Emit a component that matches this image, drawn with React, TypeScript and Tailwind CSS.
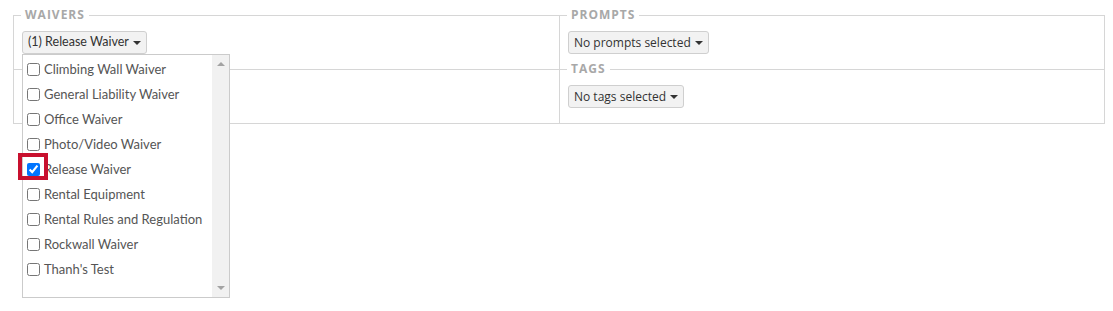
import React from "react";

const WAIVERS = [
  "Climbing Wall Waiver",
  "General Liability Waiver",
  "Office Waiver",
  "Photo/Video Waiver",
  "Release Waiver",
  "Rental Equipment",
  "Rental Rules and Regulation",
  "Rockwall Waiver",
  "Thanh's Test",
];

const SELECTED = "Release Waiver";

function Caret() {
  return <span className="ml-[4px] inline-block h-0 w-0 border-x-4 border-t-4 border-x-transparent border-t-[#333]" />;
}

function Legend({ children }: { children: React.ReactNode }) {
  return (
    <span className="absolute -top-[9px] left-[7px] bg-white px-1 font-['Open_Sans',sans-serif] text-[12px] font-bold leading-4 tracking-[1px] text-[#a8a8a8]">
      {children}
    </span>
  );
}

function DropButton({ label, lato }: { label: string; lato?: boolean }) {
  return (
    <button
      type="button"
      className={`flex h-[23px] items-center rounded-[3px] border border-[#cfcfcf] bg-[#f2f2f2] pl-[5px] pr-[5px] leading-none text-[#333] ${
        lato ? "font-['Lato',sans-serif] text-[12.5px]" : "font-['Open_Sans',sans-serif] text-[12px]"
      }`}
    >
      {label}
      <Caret />
    </button>
  );
}

function WaiverList() {
  return (
    <div className="absolute left-0 top-[23px] z-10 flex h-[244px] w-[208px] border border-[#cbcbcb] bg-white">
      <ul className="flex-1 pl-1 pt-[2px]">
        {WAIVERS.map((w) => (
          <li key={w} className="relative flex h-[25px] items-center gap-[4px] font-['Lato',sans-serif] text-[13px] text-[#555]">
            <input type="checkbox" readOnly checked={w === SELECTED} className="m-0 h-[13px] w-[13px]" />
            <span>{w}</span>
            {w === SELECTED && (
              <span className="absolute left-[-9px] top-[-4px] h-[27px] w-[30px] border-4 border-[#c8102e]" />
            )}
          </li>
        ))}
      </ul>
      <div className="flex w-[17px] flex-col items-center justify-between bg-[#f1f1f1] py-[7px]">
        <span className="h-0 w-0 border-x-4 border-b-4 border-x-transparent border-b-[#a3a3a3]" />
        <span className="h-0 w-0 border-x-4 border-t-4 border-x-transparent border-t-[#a3a3a3]" />
      </div>
    </div>
  );
}

const cell = "relative flex h-[54px] items-start border-l border-t border-[#d6d6d6] pl-2 pt-[15px]";

export default function App() {
  return (
    <div className="min-h-[311px] bg-white pl-[13px] pt-[15px]">
      <div className="grid w-[1092px] grid-cols-[546px_1fr] border-b border-r border-[#d6d6d6]">
        <div className={cell}>
          <Legend>WAIVERS</Legend>
          <div className="relative">
            <DropButton label="(1) Release Waiver" lato />
            <WaiverList />
          </div>
        </div>
        <div className={cell}>
          <Legend>PROMPTS</Legend>
          <DropButton label="No prompts selected" />
        </div>
        <div className={cell} />
        <div className={cell}>
          <Legend>TAGS</Legend>
          <DropButton label="No tags selected" />
        </div>
      </div>
    </div>
  );
}
